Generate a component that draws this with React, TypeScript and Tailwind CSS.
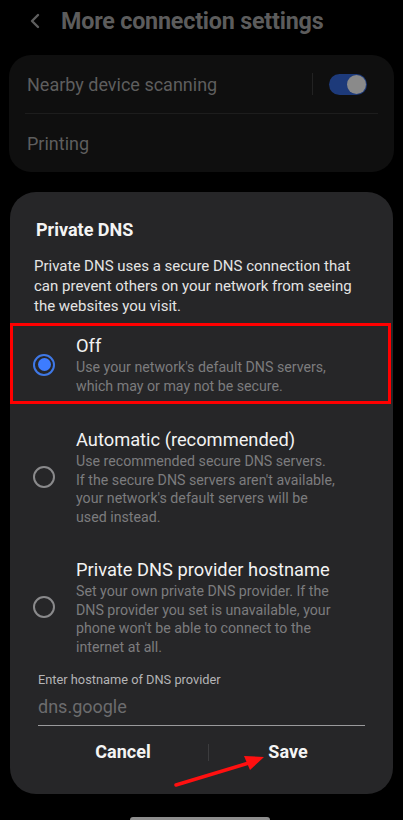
import { ReactNode } from "react";

const font = { fontFamily: "Roboto, 'Noto Sans', sans-serif" };

function Radio({ checked }: { checked?: boolean }) {
    if (checked) {
        return (
            <div className="w-[22px] h-[22px] shrink-0 rounded-full border-2 border-[#3f78e6] flex items-center justify-center">
                <div className="w-[13px] h-[13px] rounded-full bg-[#3d7cff]" />
            </div>
        );
    }
    return <div className="w-[22px] h-[22px] shrink-0 rounded-full border-2 border-[#8a8a8c]" />;
}

function Option({ checked, title, lines }: { checked?: boolean; title: string; lines: string[] }) {
    return (
        <div className="flex items-center">
            <Radio checked={checked} />
            <div className="ml-[21px]">
                <div className="text-[18.3px] leading-[24px] text-[#f2f2f2]">{title}</div>
                {lines.map((l) => (
                    <div key={l} className="text-[14.2px] leading-[18.5px] text-[#7c7c7e] whitespace-nowrap">
                        {l}
                    </div>
                ))}
            </div>
        </div>
    );
}

function Row({ children }: { children: ReactNode }) {
    return <div className="h-[58px] flex items-center px-[18px]">{children}</div>;
}

export default function App() {
    return (
        <div className="relative w-[403px] h-[820px] bg-black overflow-hidden" style={font}>
            {/* Header */}
            <div className="h-[42px] flex items-center">
                <svg width="12" height="16" viewBox="0 0 12 16" className="ml-[29px]">
                    <path d="M9 2 L3 8 L9 14" fill="none" stroke="#5e5e5e" strokeWidth="2.4" strokeLinecap="round" strokeLinejoin="round" />
                </svg>
                <div className="ml-[20px] text-[23.3px] font-bold text-[#5c5c5c] tracking-[-0.2px]">More connection settings</div>
            </div>

            {/* Settings card (dimmed) */}
            <div className="mt-[13px] mx-[9px] rounded-[22px] bg-[#0f0f0f]">
                <Row>
                    <span className="flex-1 text-[18px] text-[#5e5e5e]">Nearby device scanning</span>
                    <div className="w-px h-[22px] bg-[#222]" />
                    <div className="ml-[16px] mr-[9px] w-[38px] h-[21px] rounded-full bg-[#1d3a7a] flex items-center justify-end pr-[1px]">
                        <div className="w-[19px] h-[19px] rounded-full bg-[#8a8a8a]" />
                    </div>
                </Row>
                <div className="mx-[16px] h-px bg-[#1d1d1d]" />
                <Row>
                    <span className="text-[18px] text-[#5e5e5e]">Printing</span>
                </Row>
            </div>

            {/* Dialog */}
            <div className="mt-[20px] mx-[10px] rounded-[26px] bg-[#262628]">
                <div className="pt-[26px] px-[26px] text-[18px] leading-[24px] font-bold text-[#f4f4f4]">Private DNS</div>
                <div className="mt-[14px] px-[24px] text-[15px] leading-[20px] text-[#e4e4e4]">
                    <div className="whitespace-nowrap">Private DNS uses a secure DNS connection that</div>
                    <div className="whitespace-nowrap">can prevent others on your network from seeing</div>
                    <div className="whitespace-nowrap">the websites you visit.</div>
                </div>

                {/* highlighted option */}
                <div className="mt-[7px] mr-[2px] border-[3px] border-[#ff0000] pt-[8px] pb-[6px] pl-[20px]">
                    <Option
                        checked
                        title="Off"
                        lines={["Use your network's default DNS servers,", "which may or may not be secure."]}
                    />
                </div>

                <div className="mt-[24px] pl-[23px]">
                    <Option
                        title="Automatic (recommended)"
                        lines={[
                            "Use recommended secure DNS servers.",
                            "If the secure DNS servers aren't available,",
                            "your network's default servers will be",
                            "used instead.",
                        ]}
                    />
                </div>

                <div className="mt-[32px] pl-[23px]">
                    <Option
                        title="Private DNS provider hostname"
                        lines={[
                            "Set your own private DNS provider. If the",
                            "DNS provider you set is unavailable, your",
                            "phone won't be able to connect to the",
                            "internet at all.",
                        ]}
                    />
                </div>

                <div className="mt-[16px] px-[28px] text-[12.8px] leading-[16px] text-[#b4b4b6]">Enter hostname of DNS provider</div>
                <div className="mt-[8px] mx-[28px] pb-[7px] border-b border-[#9a9a9c] text-[18px] leading-[22px] text-[#6c6c6e]">
                    dns.google
                </div>

                <div className="mt-[14px] ml-[28px] pb-[30px] flex items-center">
                    <div className="w-[170px] text-center text-[18px] leading-[24px] font-bold text-[#f4f4f4]">Cancel</div>
                    <div className="w-px h-[17px] bg-[#3c3c3e]" />
                    <div className="w-[158px] text-center text-[18px] leading-[24px] font-bold text-[#f4f4f4]">Save</div>
                </div>
            </div>

            {/* home indicator */}
            <div className="absolute bottom-0 left-[130px] w-[140px] h-[3px] rounded-t-full bg-[#8e8e8e]" />

            {/* annotation arrow */}
            <svg className="absolute inset-0 pointer-events-none" width="403" height="820">
                <line x1="176" y1="785" x2="252" y2="762" stroke="#ff1010" strokeWidth="3.5" strokeLinecap="round" />
                <polygon points="264,757 244,756 250,770" fill="#ff1010" />
            </svg>
        </div>
    );
}
